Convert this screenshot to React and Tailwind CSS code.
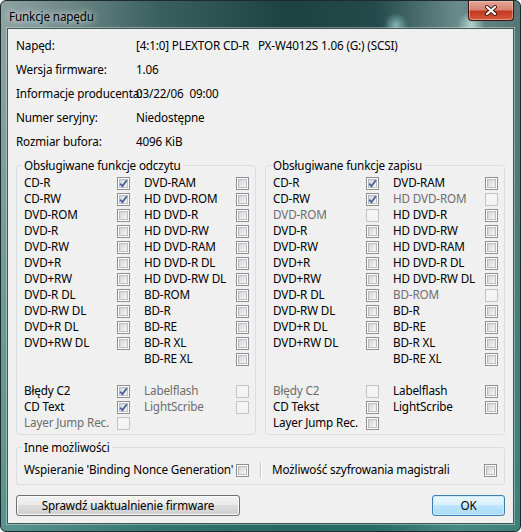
import { useState } from "react";

const info = [
  ["Napęd:", "[4:1:0] PLEXTOR CD-R   PX-W4012S 1.06 (G:) (SCSI)"],
  ["Wersja firmware:", "1.06"],
  ["Informacje producenta:", "03/22/06  09:00"],
  ["Numer seryjny:", "Niedostępne"],
  ["Rozmiar bufora:", "4096 KiB"],
];

const mediaA = ["CD-R", "CD-RW", "DVD-ROM", "DVD-R", "DVD-RW", "DVD+R", "DVD+RW", "DVD-R DL", "DVD-RW DL", "DVD+R DL", "DVD+RW DL"];
const mediaB = ["DVD-RAM", "HD DVD-ROM", "HD DVD-R", "HD DVD-RW", "HD DVD-RAM", "HD DVD-R DL", "HD DVD-RW DL", "BD-ROM", "BD-R", "BD-RE", "BD-R XL", "BD-RE XL"];

const read = {
  title: "Obsługiwane funkcje odczytu",
  a: mediaA.map((t, i) => ({ t, c: i < 2 })),
  b: mediaB.map((t) => ({ t })),
  extra: [
    [{ t: "Błędy C2", c: true }, { t: "Labelflash", d: true }],
    [{ t: "CD Text", c: true }, { t: "LightScribe", d: true }],
    [{ t: "Layer Jump Rec.", d: true }, null],
  ],
};

const write = {
  title: "Obsługiwane funkcje zapisu",
  a: mediaA.map((t, i) => ({ t, c: i < 2, d: t === "DVD-ROM" })),
  b: mediaB.map((t) => ({ t, d: t === "HD DVD-ROM" || t === "BD-ROM" })),
  extra: [
    [{ t: "Błędy C2", d: true }, { t: "Labelflash" }],
    [{ t: "CD Tekst" }, { t: "LightScribe" }],
    [{ t: "Layer Jump Rec." }, null],
  ],
};

function Box({ checked, disabled }) {
  if (disabled) {
    return <span className="block w-[13px] h-[13px] shrink-0 border border-[#c4c4c4] bg-[#f4f4f4]" />;
  }
  return (
    <span className="relative block w-[13px] h-[13px] shrink-0 border border-[#8f8f8f] bg-white p-[1px]">
      <span className="block w-full h-full border border-[#b9bcc0] bg-[linear-gradient(135deg,#d0d3d7,#f7f7f7)]" />
      {checked && (
        <svg className="absolute inset-0" width="11" height="11" viewBox="0 0 11 11">
          <path d="M2.3 5.6 L4.4 8.3 L8.8 2.3" fill="none" stroke="#4b5d96" strokeWidth="1.8" strokeLinejoin="round" />
        </svg>
      )}
    </span>
  );
}

function Cell({ item, labelClass }) {
  if (!item) return <span className="block w-[106px]" />;
  return (
    <span className="flex items-center">
      <span className={`${labelClass} whitespace-nowrap ${item.d ? "text-[#6d6d6d]" : "text-black"}`}>{item.t}</span>
      <Box checked={item.c} disabled={item.d} />
    </span>
  );
}

function Row({ left, right }) {
  return (
    <div className="flex h-4 items-center">
      <Cell item={left} labelClass="w-[93px]" />
      <span className="w-[14px]" />
      <Cell item={right} labelClass="w-[92px]" />
    </div>
  );
}

function Group({ data }) {
  const rows = [];
  for (let i = 0; i < 12; i++) rows.push([data.a[i], data.b[i]]);
  return (
    <fieldset className="w-[240px] rounded-[3px] border border-[#d5dfe5] pl-[7px] pt-[2px] pb-[3px]">
      <legend className="-ml-[2px] px-[2px] leading-4">{data.title}</legend>
      {rows.map(([l, r], i) => (
        <Row key={i} left={l} right={r} />
      ))}
      <div className="h-4" />
      {data.extra.map(([l, r], i) => (
        <Row key={"x" + i} left={l} right={r} />
      ))}
    </fieldset>
  );
}

function CloseButton() {
  return (
    <div className="flex h-[20px] w-[46px] items-center justify-center rounded-b-[4px] border border-t-0 border-[#3a1410] bg-[linear-gradient(to_bottom,#e3a395_0%,#d88472_45%,#c3381f_55%,#d65a3c_100%)] shadow-[inset_0_0_0_1px_rgba(255,220,210,0.45)]">
      <svg width="14" height="11" viewBox="0 0 14 11">
        <path d="M3 2 L11 9 M11 2 L3 9" stroke="#3b1a16" strokeWidth="4" strokeLinecap="round" />
        <path d="M3 2 L11 9 M11 2 L3 9" stroke="#ffffff" strokeWidth="2.2" strokeLinecap="round" />
      </svg>
    </div>
  );
}

export default function App() {
  const [hover, setHover] = useState(false);

  return (
    <div className="w-[521px] h-[532px] [font-family:'Noto_Sans',sans-serif] text-[11.7px] tracking-[-0.15px] text-black">
      <div className="flex h-full flex-col rounded-[6px] border border-[#1c2c2c] bg-[radial-gradient(circle_at_395px_24px,rgba(170,225,225,0.65),transparent_12px),radial-gradient(circle_at_470px_24px,rgba(205,240,230,0.75),transparent_14px),linear-gradient(to_bottom,rgba(0,0,0,0)_30px,rgba(45,135,125,0.55)_100%),linear-gradient(to_right,#8ea3a2_0%,#6f8a89_12%,#3c6060_30%,#1e4241_55%,#24494a_72%,#6a8b89_88%,#557574_100%)]">
        <div className="flex h-[27px] items-start justify-between pl-[8px] pr-[6px]">
          <span className="mt-[7px] leading-4 [text-shadow:0_0_6px_rgba(255,255,255,0.9),0_0_10px_rgba(255,255,255,0.6)]">
            Funkcje napędu
          </span>
          <CloseButton />
        </div>

        <div className="mx-[6px] mb-[7px] flex flex-1 flex-col border border-[#3e5757] bg-[#f0f0f0] px-[8px] pt-[5px] shadow-[0_0_0_1px_rgba(255,255,255,0.35)]">
          <div>
            {info.map(([k, v]) => (
              <div key={k} className="grid h-6 grid-cols-[120px_1fr] items-center">
                <span className="whitespace-nowrap">{k}</span>
                <span className="whitespace-pre">{v}</span>
              </div>
            ))}
          </div>

          <div className="mt-[3px] flex gap-[9px]">
            <Group data={read} />
            <Group data={write} />
          </div>

          <fieldset className="mt-[4px] rounded-[3px] border border-[#d5dfe5] pl-[7px] pt-[7px] pb-[6px]">
            <legend className="-ml-[2px] px-[2px] leading-4">Inne możliwości</legend>
            <div className="flex h-4 items-center">
              <span className="w-[212px] whitespace-nowrap">Wspieranie 'Binding Nonce Generation'</span>
              <Box />
              <span className="ml-[11px] h-4 w-px bg-[#c9c9c9] shadow-[1px_0_0_#ffffff]" />
              <span className="ml-[11px] w-[212px] whitespace-nowrap">Możliwość szyfrowania magistrali</span>
              <Box />
            </div>
          </fieldset>

          <div className="mt-[10px] flex justify-between">
            <button
              onMouseEnter={() => setHover(true)}
              onMouseLeave={() => setHover(false)}
              className={`h-[21px] w-[224px] rounded-[3px] border border-[#707070] shadow-[inset_0_0_0_1px_#fbfbfb] ${hover ? "bg-[linear-gradient(to_bottom,#eaf6fd_0%,#d9f0fc_50%,#bee6fd_50%,#a7d9f5_100%)]" : "bg-[linear-gradient(to_bottom,#f2f2f2_0%,#ebebeb_50%,#dddddd_50%,#cfcfcf_100%)]"}`}
            >
              Sprawdź uaktualnienie firmware
            </button>
            <button className="h-[21px] w-[73px] rounded-[3px] border border-[#3c7fb1] bg-[linear-gradient(to_bottom,#eaf6fd_0%,#d9f0fc_50%,#bee6fd_50%,#a7d9f5_100%)] shadow-[inset_0_0_0_1px_#c9ecfc]">
              OK
            </button>
          </div>
        </div>
      </div>
    </div>
  );
}
